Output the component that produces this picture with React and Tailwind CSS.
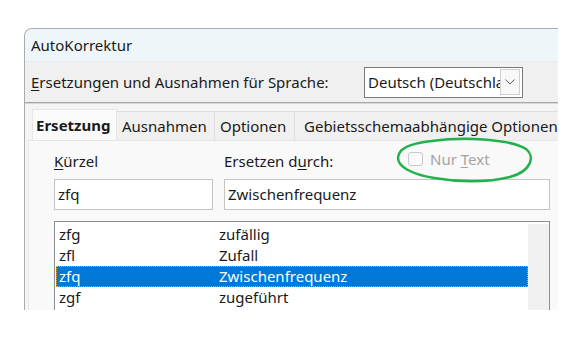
export default function App() {
  const rows = [
    { k: 'zfg', v: 'zufällig' },
    { k: 'zfl', v: 'Zufall' },
    { k: 'zfq', v: 'Zwischenfrequenz', sel: true },
    { k: 'zgf', v: 'zugeführt' },
  ];

  return (
    <div className="relative w-[581px] h-[347px] overflow-hidden bg-white text-[15px] text-[#1a1a1a] font-['Noto_Sans',sans-serif]">
      <div className="ml-[24px] mt-[28px] w-[534px] h-[282px] flex flex-col border-l border-t border-[#ababab] rounded-tl-[8px] overflow-hidden bg-[#f0f0f0]">
        {/* Title bar */}
        <div className="h-[33px] shrink-0 flex items-center pl-[6px] bg-[#eef6f9] border-b border-[#e4e9ec]">
          AutoKorrektur
        </div>

        {/* Language row */}
        <div className="h-[40px] shrink-0 flex items-center pl-[6px]">
          <span className="w-[333px]">
            <span className="underline underline-offset-2">E</span>rsetzungen und Ausnahmen für Sprache:
          </span>
          <div className="w-[159px] h-[31px] flex items-center bg-white border border-[#7a7a7a] pl-[3px] pr-[2px]">
            <span className="flex-1 overflow-hidden whitespace-nowrap">Deutsch (Deutschla</span>
            <div className="w-[20px] h-[26px] shrink-0 flex items-center justify-center bg-[#f8f8f8] border border-[#d0d0d0]">
              <svg width="10" height="6" viewBox="0 0 10 6" fill="none" stroke="#606060" strokeWidth="1">
                <path d="M0.5 0.5 L5 5 L9.5 0.5" />
              </svg>
            </div>
          </div>
        </div>

        {/* Separator */}
        <div className="h-[2px] shrink-0 bg-[#a8a8a8] border-b border-[#d8d8d8]" />

        {/* Tabs */}
        <div className="flex flex-col flex-1 pl-[3px] pt-[5px] bg-[#f4f4f4]">
          <div className="h-[31px] shrink-0 flex items-end pl-[4px]">
            <div className="h-[31px] w-[85px] flex items-center pl-[3px] bg-[#fafafa] border-t border-x border-[#e6e6e6] font-bold">
              Ersetzung
            </div>
            <div className="h-[29px] w-[98px] flex items-center pl-[5px] bg-[#f0f0f0] border-t border-r border-[#dedede]">
              Ausnahmen
            </div>
            <div className="h-[29px] w-[80px] flex items-center pl-[5px] bg-[#f0f0f0] border-t border-r border-[#dedede]">
              Optionen
            </div>
            <div className="h-[29px] flex-1 flex items-center pl-[9px] bg-[#f0f0f0] border-t border-[#dedede] whitespace-nowrap overflow-hidden">
              Gebietsschemaabhängige Optionen
            </div>
          </div>

          {/* Panel */}
          <div className="flex-1 bg-[#f9f9f9] border-l border-t border-[#e6e6e6] pl-[25px] pt-[7px]">
            <div className="flex">
              <div className="w-[170px] flex flex-col">
                <div className="h-[26px] flex items-center">
                  <span className="underline underline-offset-2">K</span>ürzel
                </div>
                <div className="mt-[5px] w-[159px] h-[31px] flex items-center pl-[3px] bg-white border border-[#c4c4c4]">
                  zfq
                </div>
              </div>
              <div className="flex flex-col w-[326px]">
                <div className="h-[26px] flex items-center">
                  <span className="w-[184px]">
                    Ersetzen d<span className="underline underline-offset-2">u</span>rch:
                  </span>
                  <span className="flex items-center gap-[7px] text-[#a3a3a3] mt-[-4px]">
                    <span className="w-[15px] h-[14px] border border-[#c8c8c8] rounded-[3px] bg-[#fafafa]" />
                    <span>Nur <span className="underline underline-offset-2">T</span>ext</span>
                  </span>
                </div>
                <div className="mt-[5px] h-[31px] flex items-center pl-[3px] bg-white border border-[#c4c4c4]">
                  Zwischenfrequenz
                </div>
              </div>
            </div>

            {/* List */}
            <div className="mt-[11px] w-[496px] h-[100px] flex bg-white border border-[#8a8f96] pl-[1px] pt-[2px]">
              <div className="flex-1 flex flex-col">
                {rows.map((r) => (
                  <div
                    key={r.k}
                    className={
                      r.sel
                        ? 'h-[21px] flex items-center pl-[3px] bg-[#0078d7] text-white outline-1 outline-dotted outline-[#e8a050] -outline-offset-1'
                        : 'h-[21px] flex items-center pl-[3px]'
                    }
                  >
                    <span className="w-[160px]">{r.k}</span>
                    <span>{r.v}</span>
                  </div>
                ))}
              </div>
              <div className="w-[21px] bg-[#f0f0f0]" />
            </div>
          </div>
        </div>
      </div>

      {/* Hand-drawn green ellipse */}
      <svg className="absolute left-[392px] top-[136px]" width="145" height="52" viewBox="0 0 145 52" fill="none">
        <path
          d="M40 5 C75 0 120 4 134 13 C143 20 140 35 118 41 C95 47 65 46 42 42 C18 38 6 30 6 22 C6 12 20 7 40 5"
          stroke="#22b14c"
          strokeWidth="2.5"
          strokeLinecap="round"
        />
      </svg>
    </div>
  );
}
